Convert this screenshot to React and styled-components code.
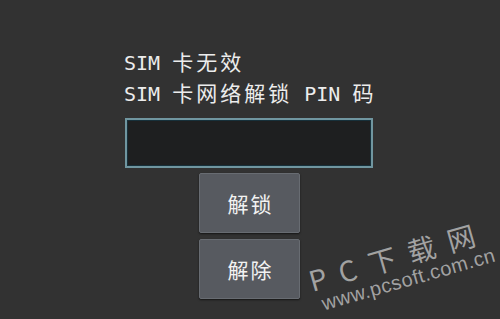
import React from "react";
import styled, { createGlobalStyle } from "styled-components";

const GlobalStyle = createGlobalStyle`
  html, body {
    margin: 0;
    padding: 0;
    background: #323232;
  }
`;

const Screen = styled.div`
  position: relative;
  width: 500px;
  height: 319px;
  background: #323232;
  overflow: hidden;
  font-family: "Noto Sans CJK SC", "Noto Sans", sans-serif;
  color: #ececec;
`;

const Panel = styled.div`
  display: flex;
  flex-direction: column;
  padding: 48px 0 0 124px;
`;

const Message = styled.div`
  height: 31px;
  font-family: "DejaVu Sans Mono", "Noto Sans CJK SC", monospace;
  font-size: 20px;
  line-height: 31px;
  white-space: nowrap;
`;

const Wide = styled.span`
  font-family: "Noto Sans CJK SC", sans-serif;
  font-size: 21px;
  line-height: 1;
  letter-spacing: 3px;
`;

const PinField = styled.div`
  width: 244px;
  height: 46px;
  margin: 8px 0 0 1px;
  background: #1e1f20;
  border: 2px solid #7096a0;
  box-shadow: inset 0 0 0 1px #17303a;
`;

const ButtonColumn = styled.div`
  display: flex;
  flex-direction: column;
  gap: 6px;
  margin: 5px 0 0 75px;
`;

const ActionButton = styled.button`
  width: 101px;
  height: 60px;
  background: #575a60;
  border: 1px solid #686c72;
  border-radius: 2px;
  box-shadow: 0 1px 2px rgba(0, 0, 0, 0.6);
  color: #f2f2f2;
  font-family: "Noto Sans CJK SC", sans-serif;
  font-size: 21px;
  letter-spacing: 2px;
  padding: 0 0 0 2px;
`;

const Watermark = styled.div`
  position: absolute;
  left: 305px;
  top: 266px;
  transform: rotate(-16deg);
  transform-origin: left top;
  color: rgba(200, 200, 200, 0.75);
  font-family: "Noto Sans CJK SC", sans-serif;
  pointer-events: none;
`;

const WatermarkTitle = styled.div`
  font-size: 28px;
  line-height: 30px;
  letter-spacing: 13px;
  white-space: nowrap;
`;

const WatermarkUrl = styled.div`
  font-family: "Liberation Sans", sans-serif;
  font-size: 20px;
  line-height: 22px;
  letter-spacing: 0.5px;
  margin-left: 6px;
  white-space: nowrap;
`;

export default function App() {
  return (
    <>
      <GlobalStyle />
      <Screen>
        <Panel>
          <Message>
            SIM <Wide>卡无效</Wide>
          </Message>
          <Message>
            SIM <Wide>卡网络解锁</Wide> PIN <Wide>码</Wide>
          </Message>
          <PinField />
          <ButtonColumn>
            <ActionButton>解锁</ActionButton>
            <ActionButton>解除</ActionButton>
          </ButtonColumn>
        </Panel>
        <Watermark>
          <WatermarkTitle>PC下载网</WatermarkTitle>
          <WatermarkUrl>www.pcsoft.com.cn</WatermarkUrl>
        </Watermark>
      </Screen>
    </>
  );
}
